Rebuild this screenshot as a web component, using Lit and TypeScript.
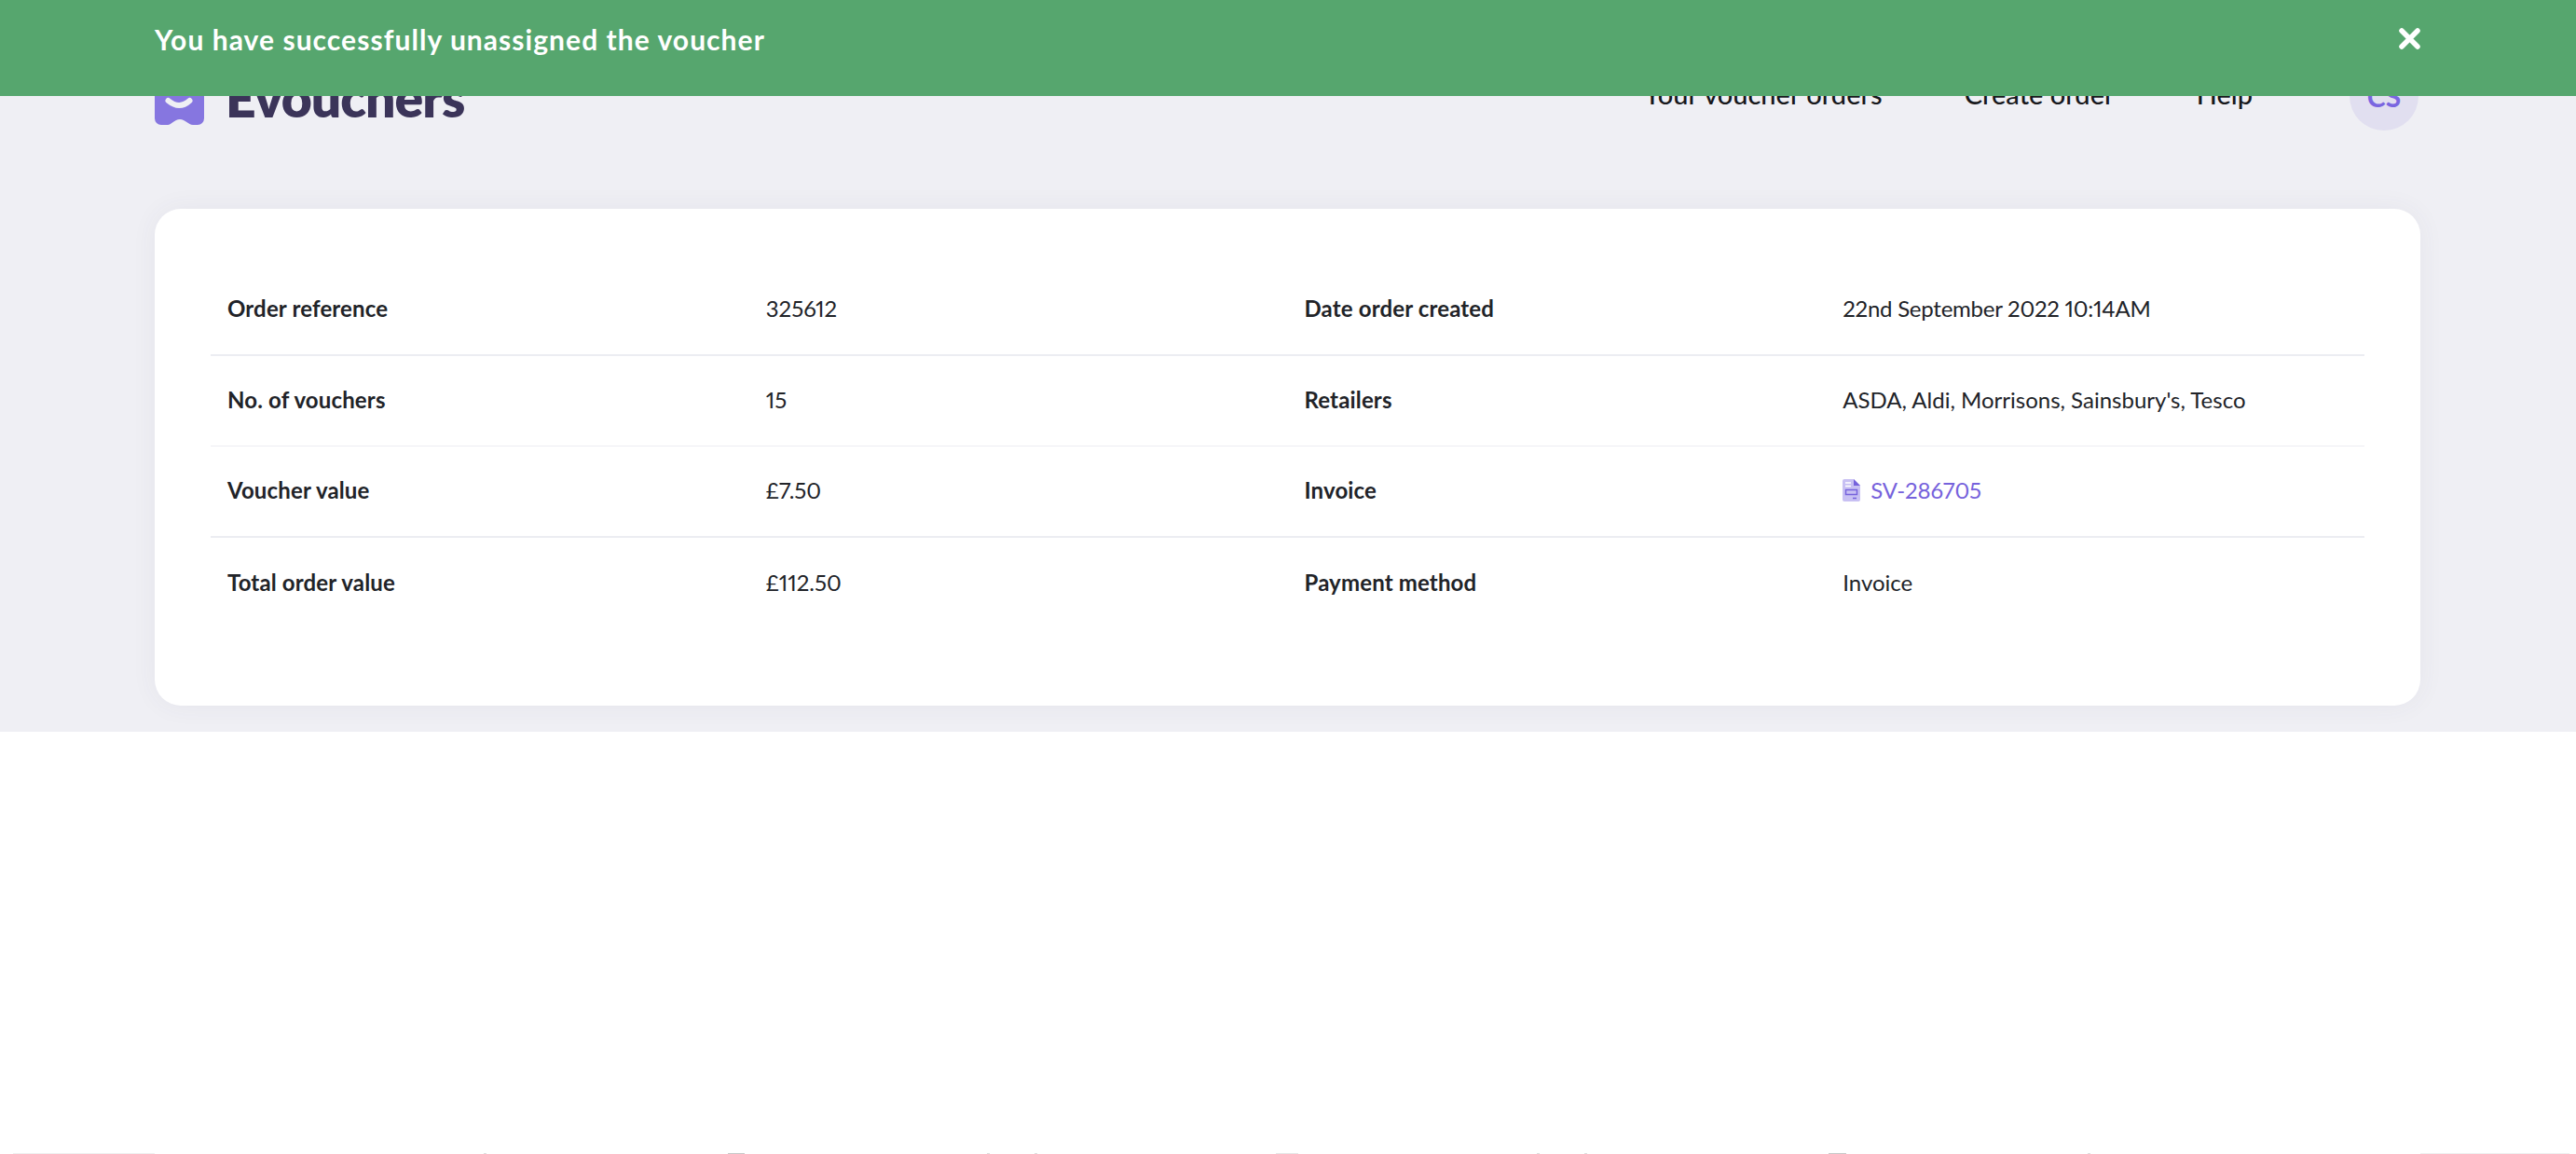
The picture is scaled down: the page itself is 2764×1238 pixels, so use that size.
import { LitElement, html, css } from "lit";
import { customElement } from "lit/decorators.js";

const rows = [
  ["Order reference", "325612", "Date order created", "22nd September 2022 10:14AM"],
  ["No. of vouchers", "15", "Retailers", "ASDA, Aldi, Morrisons, Sainsbury's, Tesco"],
  ["Voucher value", "£7.50", "Invoice", "SV-286705"],
  ["Total order value", "£112.50", "Payment method", "Invoice"],
];

// Slivers of the next section that peek in at the very bottom edge: [left, right, colour]
const slivers: [number, number, string][] = [
  [14, 166, "#eeeeee"], [519, 522, "#dddddd"], [781, 799, "#c8c8c8"], [1059, 1062, "#dddddd"],
  [1110, 1113, "#dddddd"], [1369, 1393, "#e6e6e6"], [1649, 1652, "#dddddd"], [1700, 1703, "#dddddd"],
  [1962, 1981, "#c8c8c8"], [2240, 2243, "#dddddd"], [2597, 2757, "#eeeeee"],
];

@customElement("app-root")
export class AppRoot extends LitElement {
  static styles = css`
    :host { display: block; height: 1238px; overflow: hidden; background: #fff; font-family: "Lato", "Liberation Sans", sans-serif; color: #212328; position: relative; font-feature-settings: "pnum"; }
    * { box-sizing: border-box; }
    .banner { position: absolute; top: 0; left: 0; right: 0; height: 103px; background: #56a66e; color: #fff; display: flex; justify-content: space-between; padding: 0 167px 0 166px; z-index: 2; }
    .banner .msg { font-size: 30px; font-weight: 700; margin-top: 24px; line-height: 36px; letter-spacing: 1.05px; }
    .banner svg { margin-top: 30px; width: 23px; height: 23px; }
    .page { height: 785px; background: #efeff4; padding: 0 167px 0 166px; }
    .header { height: 224px; display: flex; align-items: flex-start; justify-content: space-between; }
    .brand { display: flex; gap: 25px; margin-top: 72px; }
    .brand svg { width: 53px; height: 62px; }
    .brand span { font-size: 57px; font-weight: 800; color: #3b3459; line-height: 64px; letter-spacing: -1px; margin-top: 0; margin-left: -2px; }
    .nav { display: flex; align-items: flex-start; margin-top: 66px; }
    .nav a { font-size: 29px; font-weight: 500; color: #17181c; margin-right: 88px; line-height: 40px; margin-top: 15px; }
    .nav a:last-of-type { margin-right: 104px; }
    .avatar { width: 74px; height: 74px; border-radius: 50%; background: #e1dff0; color: #7a66e0; font-size: 30px; font-weight: 700; display: flex; align-items: center; justify-content: center; margin-right: 2px; }
    .card { height: 533px; background: #fff; border-radius: 28px; box-shadow: 0 0 28px rgba(60, 60, 100, 0.06); padding: 60px; }
    .row { display: grid; grid-template-columns: repeat(4, 1fr); height: 97.5px; align-items: center; border-bottom: 2px solid #ecedf2; font-size: 24px; padding-bottom: 2px; }
    .row:nth-child(2) { border-bottom-width: 1px; }
    .row:last-child { border-bottom: none; }
    .row > * { padding-left: 18px; }
    .row b { font-weight: 700; letter-spacing: 0.15px; }
    .date { letter-spacing: -0.25px; }
    .link { color: #7662dc; display: flex; align-items: center; gap: 11px; letter-spacing: -0.1px; }
    .link svg { width: 19px; height: 24px; }
    .tail { display: flex; height: 1px; margin-top: 452px; }
    .tail i { display: block; height: 1px; flex: none; }
  `;
  render() {
    let prev = 0;
    return html`
      <div class="banner">
        <div class="msg">You have successfully unassigned the voucher</div>
        <svg viewBox="0 0 23 23"><path d="M3 3 L20 20 M20 3 L3 20" stroke="#fff" stroke-width="5.500" stroke-linecap="round" /></svg>
      </div>
      <div class="page">
        <div class="header">
          <div class="brand">
            <svg viewBox="0 0 53 62"><path d="M0 6 a6 6 0 0 1 6 -6 h41 a6 6 0 0 1 6 6 v49 a7 7 0 0 1 -7 7 h-5 c-5 0 -8 -6 -14 -6 s-9 6 -13 6 h-7 a7 7 0 0 1 -7 -7 z" fill="#8676e0"/><path d="M14.500 36 Q26.500 46 37.500 36" fill="none" stroke="#efeff4" stroke-width="6" stroke-linecap="round"/></svg>
            <span>Evouchers</span>
          </div>
          <div class="nav">
            <a>Your voucher orders</a><a>Create order</a><a>Help</a>
            <div class="avatar">CS</div>
          </div>
        </div>
        <div class="card">
          ${rows.map((r, i) => html`<div class="row">
            <b>${r[0]}</b><span>${r[1]}</span><b>${r[2]}</b>
            ${i === 2 ? html`<span class="link"><svg viewBox="0 0 19 24"><path d="M2 0 h10 l7 7 v15 a2 2 0 0 1 -2 2 h-15 a2 2 0 0 1 -2 -2 v-20 a2 2 0 0 1 2 -2z" fill="#c8c0f3"/><path d="M12 0 l7 7 h-7z" fill="#7662dc"/><path d="M3 4 h6 M3 7.500 h6" stroke="#fff" stroke-width="1.500"/><rect x="3.500" y="11.500" width="12" height="5" fill="none" stroke="#7662dc" stroke-width="1.500"/><path d="M11 20.500 h4" stroke="#7662dc" stroke-width="1.500"/></svg>${r[3]}</span>` : html`<span class=${i === 0 ? "date" : ""}>${r[3]}</span>`}
          </div>`)}
        </div>
      </div>
      <div class="tail">
        ${slivers.map(([l, r, c]) => {
          const gap = l - prev;
          prev = r;
          return html`<i style="margin-left:${gap}px;width:${r - l}px;background:${c}"></i>`;
        })}
      </div>
    `;
  }
}
